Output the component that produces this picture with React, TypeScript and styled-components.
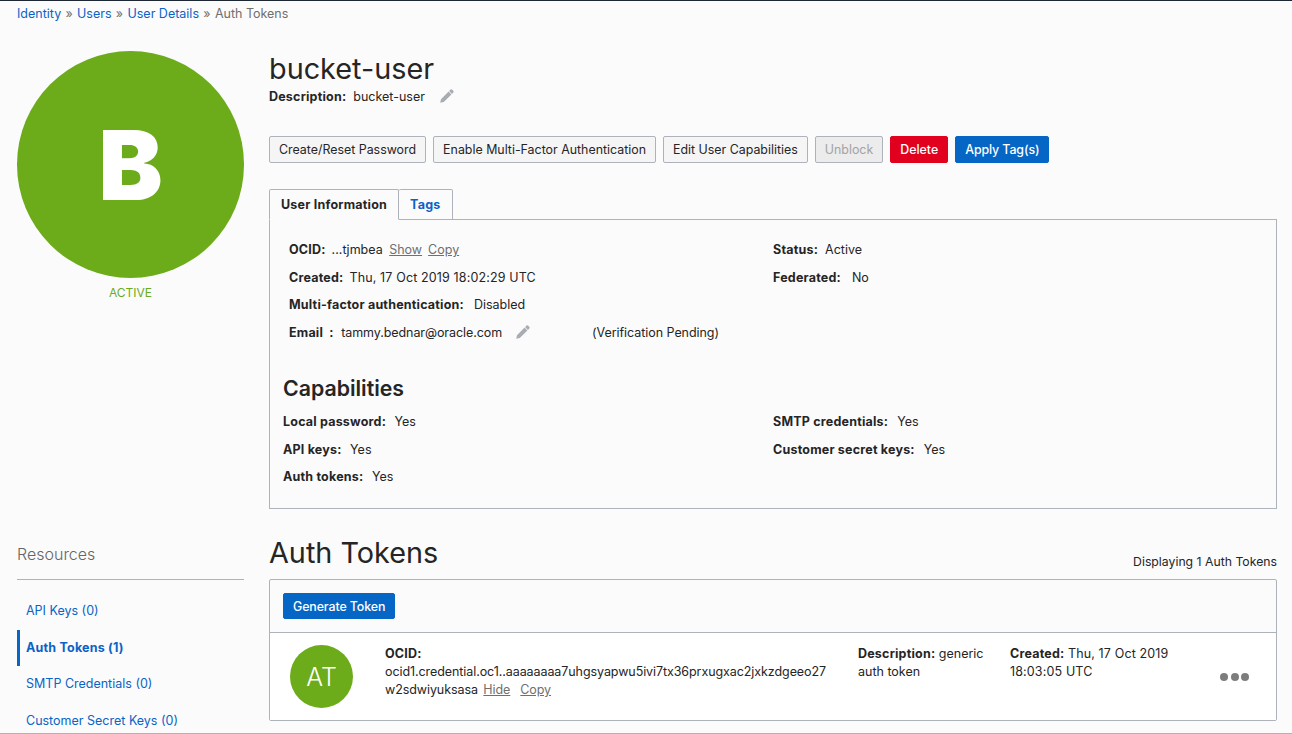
import React from "react";
import styled, { createGlobalStyle } from "styled-components";

const GlobalStyle = createGlobalStyle`
  html, body {
    margin: 0;
    padding: 0;
    background: #fbfbfc;
  }
  body {
    font-family: Inter, "Liberation Sans", sans-serif;
    font-size: 12.5px;
    color: #252525;
  }
  b {
    font-weight: 700;
    letter-spacing: 0.2px;
  }
`;

const Page = styled.div`
  box-sizing: border-box;
  width: 1292px;
  height: 734px;
  overflow: hidden;
  border-top: 1px solid #1d2733;
  border-bottom: 1px solid #aeb3bb;
  padding: 0 15px 0 17px;
`;

const Breadcrumbs = styled.nav`
  height: 26px;
  line-height: 26px;
  color: #6f6f6f;
`;

const Crumb = styled.a`
  color: #0a63c6;
`;

const Sep = styled.span`
  margin: 0 4.3px;
`;

const Layout = styled.div`
  display: grid;
  grid-template-columns: 227px 1008px;
  column-gap: 25px;
  grid-template-rows: 484px auto;
  padding-top: 24px;
`;

const AvatarColumn = styled.div`
  display: flex;
  flex-direction: column;
  align-items: center;
`;

const BigAvatar = styled.div`
  width: 227px;
  height: 227px;
  border-radius: 50%;
  background: #6cab19;
  color: #fff;
  font-size: 96px;
  font-weight: 900;
  display: flex;
  align-items: center;
  justify-content: center;
`;

const StatusLabel = styled.div`
  margin-top: 7px;
  color: #6cab19;
  font-size: 12px;
`;

const Details = styled.div`
  display: flex;
  flex-direction: column;
`;

const Title = styled.h1`
  margin: 0;
  font-size: 28.8px;
  font-weight: 400;
  line-height: 36px;
`;

const DescRow = styled.div`
  display: flex;
  align-items: center;
  height: 18px;
`;

const Label = styled.b<{ $gap?: number }>`
  margin-right: ${({ $gap }) => $gap ?? 6}px;
`;

const EditIcon = styled.svg<{ $left: number }>`
  width: 16px;
  height: 16px;
  margin-left: ${({ $left }) => $left}px;
  fill: #a9adb3;
`;

const Actions = styled.div`
  display: flex;
  gap: 7px;
  margin-top: 31px;
`;

const Button = styled.button<{ $variant?: "default" | "disabled" | "danger" | "primary" }>`
  box-sizing: border-box;
  height: 27px;
  padding: 0 9px;
  border-radius: 2px;
  font: inherit;
  font-size: 12.4px;
  font-weight: ${({ $variant }) => ($variant === "danger" || $variant === "primary" ? 500 : 400)};
  letter-spacing: ${({ $variant }) => ($variant === "primary" ? "-0.1px" : "0")};
  border: 1px solid
    ${({ $variant }) =>
      $variant === "danger" ? "#e2001f" : $variant === "primary" ? "#0566c6" : "#aeb3bb"};
  color: ${({ $variant }) =>
    $variant === "danger" || $variant === "primary"
      ? "#fff"
      : $variant === "disabled"
      ? "#a3a3a3"
      : "#252525"};
  background: ${({ $variant }) =>
    $variant === "danger"
      ? "#e2001f"
      : $variant === "primary"
      ? "#0566c6"
      : $variant === "disabled"
      ? "#ececed"
      : "#f5f5f6"};
`;

const Tabs = styled.div`
  display: flex;
  margin-top: 26px;
  margin-bottom: -1px;
  position: relative;
`;

const Tab = styled.div<{ $active?: boolean }>`
  box-sizing: border-box;
  height: 31px;
  padding: 0 11px;
  line-height: 29px;
  font-weight: 700;
  letter-spacing: 0.22px;
  border: 1px solid #aeb3bb;
  border-left-width: ${({ $active }) => ($active ? 1 : 0)}px;
  border-bottom-color: ${({ $active }) => ($active ? "#fbfbfc" : "#aeb3bb")};
  border-radius: 2px 2px 0 0;
  color: ${({ $active }) => ($active ? "#252525" : "#0a63c6")};
`;

const InfoPanel = styled.section`
  box-sizing: border-box;
  height: 290px;
  border: 1px solid #aeb3bb;
  padding: 16px 13px 0;
`;

const InfoGrid = styled.div<{ $indent?: number }>`
  display: grid;
  grid-template-columns: ${({ $indent }) => 490 - ($indent ?? 0)}px 1fr;
  padding-left: ${({ $indent }) => $indent ?? 0}px;
`;

const InfoCol = styled.div`
  display: flex;
  flex-direction: column;
`;

const InfoRow = styled.div`
  display: flex;
  align-items: center;
  height: 27.5px;
  white-space: nowrap;
`;

const DateText = styled.span`
  letter-spacing: 0.14px;
`;

const EmailText = styled.span`
  letter-spacing: -0.08px;
`;

const MutedLink = styled.a<{ $left: number }>`
  color: #6f6f6f;
  text-decoration: underline;
  margin-left: ${({ $left }) => $left}px;
`;

const Pending = styled.span`
  margin-left: 61px;
  letter-spacing: -0.05px;
`;

const SectionTitle = styled.h2`
  margin: 28px 0 6px;
  font-size: 21.3px;
  font-weight: 600;
  line-height: 28px;
`;

const ResourcesNav = styled.aside`
  display: flex;
  flex-direction: column;
`;

const ResourcesTitle = styled.div`
  height: 45px;
  padding-top: 6px;
  box-sizing: border-box;
  font-size: 16px;
  font-weight: 300;
  line-height: 26px;
  color: #666;
  border-bottom: 1px solid #aeb3bb;
`;

const NavList = styled.div`
  display: flex;
  flex-direction: column;
  padding-top: 13px;
`;

const NavItem = styled.a<{ $active?: boolean }>`
  height: 36.7px;
  line-height: 36px;
  padding-left: ${({ $active }) => ($active ? 6 : 9)}px;
  color: #0a63c6;
  font-weight: ${({ $active }) => ($active ? 700 : 400)};
  letter-spacing: ${({ $active }) => ($active ? "0.2px" : "0")};
  border-left: ${({ $active }) => ($active ? "3px solid #0566c6" : "none")};
`;

const TokensArea = styled.main`
  display: flex;
  flex-direction: column;
`;

const TokensHeader = styled.div`
  display: flex;
  justify-content: space-between;
  align-items: flex-end;
  height: 44px;
  padding-bottom: 10px;
  box-sizing: border-box;
`;

const TokensTitle = styled.h2`
  margin: 0 0 -2px;
  font-size: 28.8px;
  font-weight: 400;
  line-height: 36px;
`;

const Counter = styled.span`
  font-size: 12.25px;
  line-height: 14px;
`;

const TokensPanel = styled.section`
  box-sizing: border-box;
  height: 142px;
  border: 1px solid #aeb3bb;
  border-radius: 2px;
`;

const PanelToolbar = styled.div`
  box-sizing: border-box;
  height: 53px;
  padding: 13px 13px 0;
  border-bottom: 1px solid #aeb3bb;
`;

const SmallPrimary = styled(Button)`
  height: 26px;
`;

const TokenRow = styled.div`
  display: grid;
  grid-template-columns: 64px 504px 152px 184px 1fr;
  padding: 12px 0 0 20px;
  background: #fff;
  height: 87px;
  box-sizing: border-box;
`;

const TokenAvatar = styled.div`
  width: 63px;
  height: 63px;
  border-radius: 50%;
  background: #6cab19;
  color: #fff;
  font-size: 25px;
  font-weight: 300;
  display: flex;
  align-items: center;
  justify-content: center;
`;

const TokenCell = styled.div`
  line-height: 18px;
  padding-right: 10px;
`;

const OcidCell = styled(TokenCell)`
  padding-left: 31px;
  letter-spacing: -0.08px;
  white-space: nowrap;
`;

const MoreDots = styled.div`
  display: flex;
  gap: 2.5px;
  justify-content: flex-end;
  padding: 28px 27px 0 0;
`;

const Dot = styled.span`
  width: 8px;
  height: 8px;
  border-radius: 50%;
  background: #7d7d80;
`;

const Pencil = ({ left }: { left: number }) => (
  <EditIcon $left={left} viewBox="0 0 16 16">
    <path d="M11.6 1.6a1 1 0 0 1 1.4 0l1.4 1.4a1 1 0 0 1 0 1.4l-1.5 1.5-2.8-2.8zM9.6 3.6l2.8 2.8-7.6 7.6-3.6.8.8-3.6z" />
  </EditIcon>
);

const navItems = [
  { name: "API Keys (0)" },
  { name: "Auth Tokens (1)", active: true },
  { name: "SMTP Credentials (0)" },
  { name: "Customer Secret Keys (0)" },
];

export default function App() {
  return (
    <Page>
      <GlobalStyle />
      <Breadcrumbs>
        <Crumb>Identity</Crumb>
        <Sep>»</Sep>
        <Crumb>Users</Crumb>
        <Sep>»</Sep>
        <Crumb>User Details</Crumb>
        <Sep>»</Sep>
        Auth Tokens
      </Breadcrumbs>
      <Layout>
        <AvatarColumn>
          <BigAvatar>B</BigAvatar>
          <StatusLabel>ACTIVE</StatusLabel>
        </AvatarColumn>
        <Details>
          <Title>bucket-user</Title>
          <DescRow>
            <Label $gap={7}>Description:</Label>
            bucket-user
            <Pencil left={14} />
          </DescRow>
          <Actions>
            <Button>Create/Reset Password</Button>
            <Button>Enable Multi-Factor Authentication</Button>
            <Button>Edit User Capabilities</Button>
            <Button $variant="disabled">Unblock</Button>
            <Button $variant="danger">Delete</Button>
            <Button $variant="primary">Apply Tag(s)</Button>
          </Actions>
          <Tabs>
            <Tab $active>User Information</Tab>
            <Tab>Tags</Tab>
          </Tabs>
          <InfoPanel>
            <InfoGrid $indent={6}>
              <InfoCol>
                <InfoRow>
                  <Label>OCID:</Label>...tjmbea
                  <MutedLink $left={6.5}>Show</MutedLink>
                  <MutedLink $left={6}>Copy</MutedLink>
                </InfoRow>
                <InfoRow>
                  <Label>Created:</Label>
                  <DateText>Thu, 17 Oct 2019 18:02:29 UTC</DateText>
                </InfoRow>
                <InfoRow>
                  <Label $gap={10}>Multi-factor authentication:</Label>Disabled
                </InfoRow>
                <InfoRow>
                  <Label $gap={7.5}>Email&nbsp; :</Label>
                  <EmailText>tammy.bednar@oracle.com</EmailText>
                  <Pencil left={13} />
                  <Pending>(Verification Pending)</Pending>
                </InfoRow>
              </InfoCol>
              <InfoCol>
                <InfoRow>
                  <Label $gap={7}>Status:</Label>Active
                </InfoRow>
                <InfoRow>
                  <Label $gap={11}>Federated:</Label>No
                </InfoRow>
              </InfoCol>
            </InfoGrid>
            <SectionTitle>Capabilities</SectionTitle>
            <InfoGrid>
              <InfoCol>
                <InfoRow>
                  <Label $gap={8.5}>Local password:</Label>Yes
                </InfoRow>
                <InfoRow>
                  <Label $gap={8.5}>API keys:</Label>Yes
                </InfoRow>
                <InfoRow>
                  <Label $gap={8.5}>Auth tokens:</Label>Yes
                </InfoRow>
              </InfoCol>
              <InfoCol>
                <InfoRow>
                  <Label $gap={9}>SMTP credentials:</Label>Yes
                </InfoRow>
                <InfoRow>
                  <Label $gap={9}>Customer secret keys:</Label>Yes
                </InfoRow>
              </InfoCol>
            </InfoGrid>
          </InfoPanel>
        </Details>
        <ResourcesNav>
          <ResourcesTitle>Resources</ResourcesTitle>
          <NavList>
            {navItems.map((item) => (
              <NavItem key={item.name} $active={item.active}>
                {item.name}
              </NavItem>
            ))}
          </NavList>
        </ResourcesNav>
        <TokensArea>
          <TokensHeader>
            <TokensTitle>Auth Tokens</TokensTitle>
            <Counter>Displaying 1 Auth Tokens</Counter>
          </TokensHeader>
          <TokensPanel>
            <PanelToolbar>
              <SmallPrimary $variant="primary">Generate Token</SmallPrimary>
            </PanelToolbar>
            <TokenRow>
              <TokenAvatar>AT</TokenAvatar>
              <OcidCell>
                <b>OCID:</b>
                <br />
                ocid1.credential.oc1..aaaaaaaa7uhgsyapwu5ivi7tx36prxugxac2jxkzdgeeo27
                <br />
                w2sdwiyuksasa
                <MutedLink $left={5.5}>Hide</MutedLink>
                <MutedLink $left={10}>Copy</MutedLink>
              </OcidCell>
              <TokenCell>
                <b>Description:</b> generic
                <br />
                auth token
              </TokenCell>
              <TokenCell>
                <b>Created:</b> <DateText>Thu, 17 Oct 2019</DateText>
                <br />
                <DateText>18:03:05 UTC</DateText>
              </TokenCell>
              <MoreDots>
                <Dot />
                <Dot />
                <Dot />
              </MoreDots>
            </TokenRow>
          </TokensPanel>
        </TokensArea>
      </Layout>
    </Page>
  );
}
